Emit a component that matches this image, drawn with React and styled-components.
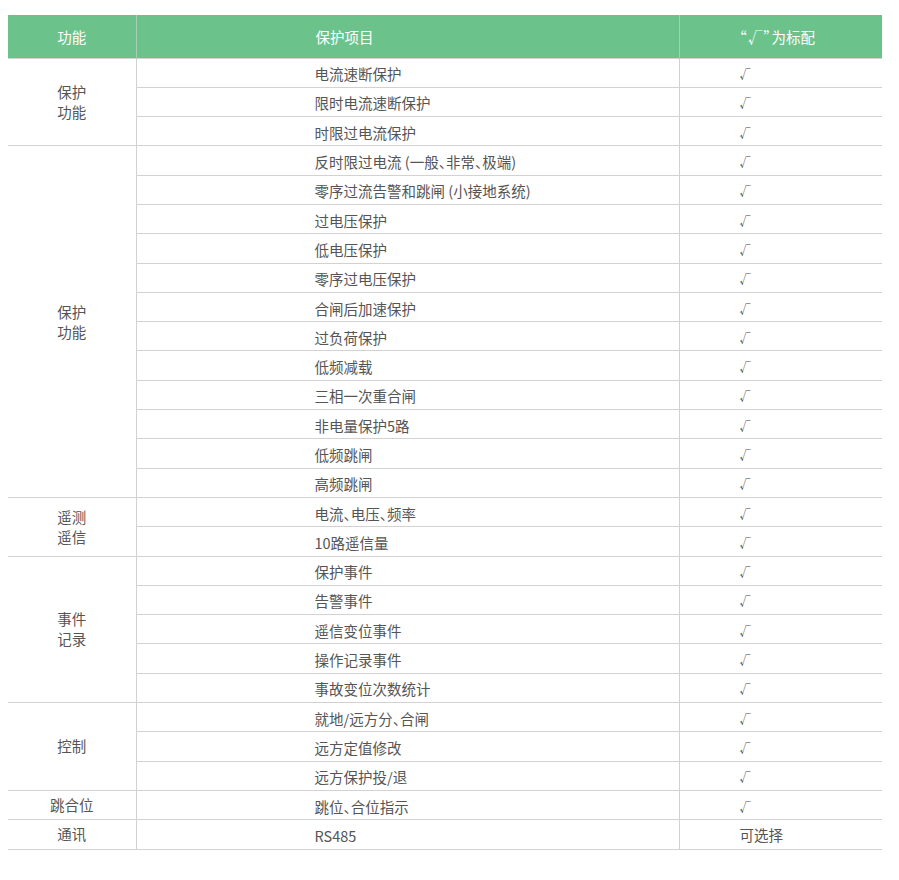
import styled, { createGlobalStyle } from "styled-components";

const GlobalStyle = createGlobalStyle`
  body {
    margin: 0;
    background: #fff;
    font-family: "Noto Sans CJK SC", "Noto Sans", sans-serif;
  }
`;

const Page = styled.div`
  padding: 15px 0 0 8px;
`;

const Table = styled.table`
  width: 874px;
  border-collapse: collapse;
  table-layout: fixed;
  font-size: 14.5px;
  color: #555;
  font-feature-settings: "halt";
`;

const HeadRow = styled.tr`
  height: 43px;
  background: #6bc38b;
`;

const HeadCell = styled.th`
  font-weight: 400;
  color: #fff;
  padding: 0 0 0 ${(p) => p.$pad || 0}px;
  text-align: ${(p) => (p.$center ? "center" : "left")};
  border-left: ${(p) => (p.$first ? "none" : "1px solid #a9cdb5")};
  vertical-align: middle;
`;

const Quote = styled.span`
  padding: 0 1px;
`;

const Row = styled.tr`
  height: 29.3px;
`;

const GroupCell = styled.td`
  text-align: center;
  line-height: 20px;
  border-top: 1px solid #d2d2d2;
  border-bottom: 1px solid #d2d2d2;
  border-right: 1px solid #d2d2d2;
  padding: 0;
  vertical-align: middle;
`;

const ItemCell = styled.td`
  padding: 2px 0 0 178px;
  border-top: 1px solid #d2d2d2;
  border-bottom: 1px solid #d2d2d2;
  white-space: nowrap;
  vertical-align: middle;
`;

const MarkCell = styled.td`
  padding: 0 0 0 60px;
  border-top: 1px solid #d2d2d2;
  border-bottom: 1px solid #d2d2d2;
  border-left: 1px solid #d2d2d2;
  vertical-align: middle;
`;

const Check = styled.span`
  font-size: 11px;
  color: #444;
`;

const groups = [
  {
    label: ["保护", "功能"],
    items: ["电流速断保护", "限时电流速断保护", "时限过电流保护"],
  },
  {
    label: ["保护", "功能"],
    items: [
      "反时限过电流 (一般、非常、极端)",
      "零序过流告警和跳闸 (小接地系统)",
      "过电压保护",
      "低电压保护",
      "零序过电压保护",
      "合闸后加速保护",
      "过负荷保护",
      "低频减载",
      "三相一次重合闸",
      "非电量保护5路",
      "低频跳闸",
      "高频跳闸",
    ],
  },
  { label: ["遥测", "遥信"], items: ["电流、电压、频率", "10路遥信量"] },
  {
    label: ["事件", "记录"],
    items: ["保护事件", "告警事件", "遥信变位事件", "操作记录事件", "事故变位次数统计"],
  },
  { label: ["控制"], items: ["就地/远方分、合闸", "远方定值修改", "远方保护投/退"] },
  { label: ["跳合位"], items: ["跳位、合位指示"] },
  { label: ["通讯"], items: ["RS485"], mark: "可选择" },
];

const App = () => (
  <Page>
    <GlobalStyle />
    <Table>
      <colgroup>
        <col style={{ width: 128 }} />
        <col style={{ width: 543 }} />
        <col style={{ width: 203 }} />
      </colgroup>
      <thead>
        <HeadRow>
          <HeadCell $first $center>
            功能
          </HeadCell>
          <HeadCell $pad={179}>保护项目</HeadCell>
          <HeadCell $pad={59}>
            <Quote>“</Quote>√<Quote>”</Quote>为标配
          </HeadCell>
        </HeadRow>
      </thead>
      <tbody>
        {groups.map((g, gi) =>
          g.items.map((item, i) => (
            <Row key={`${gi}-${i}`}>
              {i === 0 && (
                <GroupCell rowSpan={g.items.length}>
                  {g.label.map((l) => (
                    <div key={l}>{l}</div>
                  ))}
                </GroupCell>
              )}
              <ItemCell>{item}</ItemCell>
              <MarkCell>{g.mark ? g.mark : <Check>√</Check>}</MarkCell>
            </Row>
          ))
        )}
      </tbody>
    </Table>
  </Page>
);

export default App;
